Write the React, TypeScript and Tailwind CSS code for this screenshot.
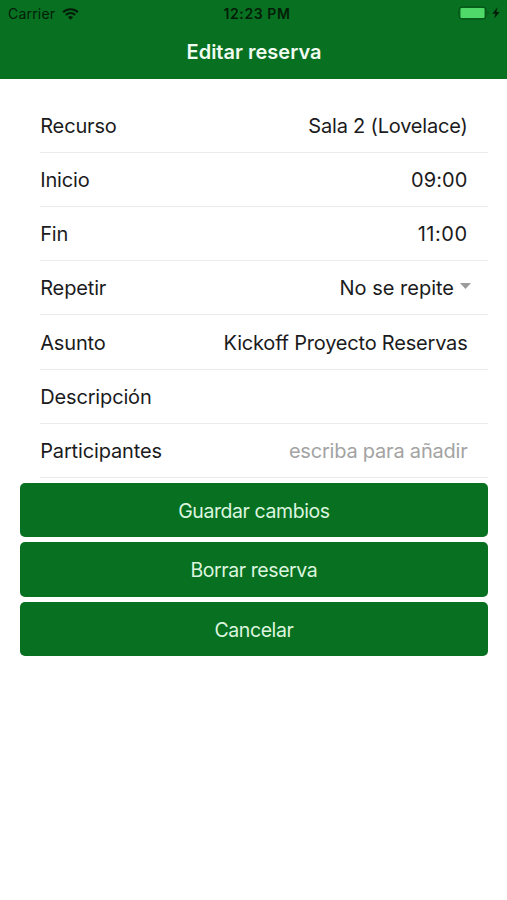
import type { ReactNode } from 'react'

interface FieldRowProps {
  label: string
  children?: ReactNode
}

function FieldRow({ label, children }: FieldRowProps) {
  return (
    <div className="flex h-[54.15px] items-center justify-between border-b border-[#ececee] pt-px pr-[20px]">
      <span className="tracking-[-0.15px]">{label}</span>
      {children}
    </div>
  )
}

interface ActionButtonProps {
  children: ReactNode
}

function ActionButton({ children }: ActionButtonProps) {
  return (
    <button
      type="button"
      className="flex h-[54.4px] w-full items-center justify-center rounded-[5px] bg-[#087021] pt-[1.4px] text-[19.5px] tracking-[-0.42px] text-[#dcf5df]"
    >
      {children}
    </button>
  )
}

function WifiIcon() {
  return (
    <svg className="mb-px h-3 w-[17px]" viewBox="0 0 17 12" fill="none">
      <path d="M1.1 4.2a10.6 10.6 0 0 1 14.8 0" stroke="#031d08" strokeWidth="2.1" />
      <path d="M3.8 7a6.7 6.7 0 0 1 9.4 0" stroke="#031d08" strokeWidth="2" />
      <path d="M8.5 11.8 6 9.3a3.6 3.6 0 0 1 5 0Z" fill="#031d08" />
    </svg>
  )
}

function BatteryIcon() {
  return (
    <svg className="mb-[2px] h-[14px] w-[46px]" viewBox="0 0 46 14">
      <rect x="1" y="1" width="27" height="12" rx="3" fill="none" stroke="#064c15" />
      <rect x="2.5" y="2" width="24" height="10" rx="1" fill="#4fd968" />
      <path d="M29.6 5v4c1.3-.6 1.3-3.4 0-4Z" fill="#064c15" />
      <path d="m39.5 1.3-5.2 6.4h3.1l-1.2 4.9 5.5-6.6h-3.2Z" fill="#031d08" />
    </svg>
  )
}

export default function App() {
  return (
    <div className="min-h-[900px] bg-white font-['Inter','Liberation_Sans',sans-serif] text-[20px] leading-6 text-[#1b1b1d]">
      <header className="h-[79px] bg-[#087021]">
        <div className="grid h-7 grid-cols-3 items-center pl-2 text-[14px] text-[#031d08]">
          <div className="flex items-center gap-[7px]">
            <span className="tracking-[0.2px]">Carrier</span>
            <WifiIcon />
          </div>
          <span className="pr-px text-center text-[14px] font-semibold tracking-[0.6px]">
            12:23 PM
          </span>
          <div className="flex justify-end pr-[3px]">
            <BatteryIcon />
          </div>
        </div>
        <h1 className="flex h-12 items-center justify-center pl-px text-[20px] font-semibold text-[#f0fbf1]">
          Editar reserva
        </h1>
      </header>
      <main className="pt-[19.9px] pr-[19.5px] pl-[20.3px]">
        <div className="pl-[19.9px]">
          <FieldRow label="Recurso">
            <span className="tracking-[-0.2px]">Sala 2 (Lovelace)</span>
          </FieldRow>
          <FieldRow label="Inicio">
            <span className="tracking-[0.1px]">09:00</span>
          </FieldRow>
          <FieldRow label="Fin">
            <span className="tracking-[0.5px]">11:00</span>
          </FieldRow>
          <FieldRow label="Repetir">
            <div className="-mr-[3.5px] flex items-center gap-1.5">
              <span>No se repite</span>
              <svg className="mb-1 h-1.5 w-[11px]" viewBox="0 0 11 6">
                <path d="M0 0h11L5.5 6Z" fill="#9b9b9b" />
              </svg>
            </div>
          </FieldRow>
          <FieldRow label="Asunto">
            <span className="tracking-[-0.2px]">Kickoff Proyecto Reservas</span>
          </FieldRow>
          <FieldRow label="Descripción" />
          <FieldRow label="Participantes">
            <span className="tracking-[-0.21px] text-[#a3a3a3]">escriba para añadir</span>
          </FieldRow>
        </div>
        <div className="flex flex-col gap-[5.2px] pt-[5px]">
          <ActionButton>Guardar cambios</ActionButton>
          <ActionButton>Borrar reserva</ActionButton>
          <ActionButton>Cancelar</ActionButton>
        </div>
      </main>
    </div>
  )
}
